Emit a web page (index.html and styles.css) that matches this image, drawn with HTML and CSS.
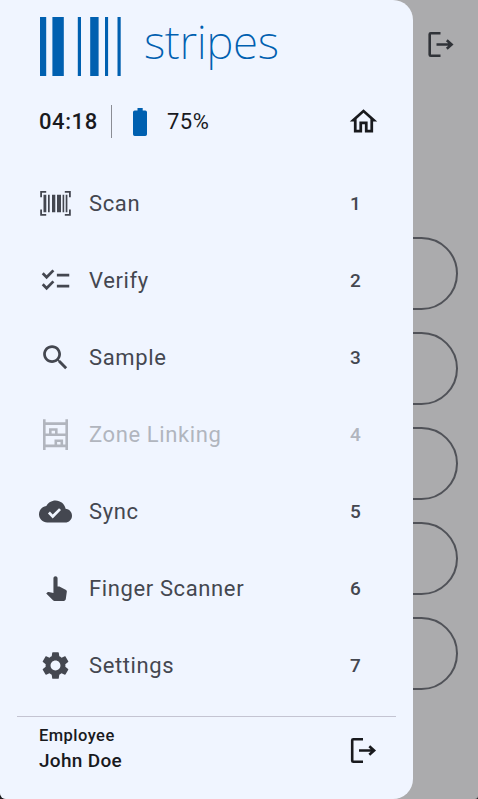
FILE: index.html
```html
<!DOCTYPE html>
<html lang="en">
<head>
<meta charset="utf-8">
<title>Stripes</title>
<link rel="stylesheet" href="styles.css">
</head>
<body>
<svg class="defs" width="0" height="0">
  <symbol id="logout" viewBox="0 0 27 27">
    <path d="M13 2.200H3.300Q2.200 2.200 2.200 3.300V23.700Q2.200 24.800 3.300 24.800H13M9 13.500H24.500M19.300 9.200l4.800 4.300-4.800 4.300" fill="none" stroke="currentColor" stroke-width="2.600"/>
  </symbol>
</svg>
<main class="page">
  <header class="page-top"><svg class="exit"><use href="#logout"/></svg></header>
  <div class="options">
    <div class="option"></div>
    <div class="option"></div>
    <div class="option"></div>
    <div class="option"></div>
    <div class="option"></div>
  </div>
</main>
<aside class="drawer">
  <div class="brand">
    <svg class="bars" viewBox="0 0 81 59"><path d="M0 0h6.200v59H0zM12.400 0h11.400v59H12.400zM37.800 0H41v59h-3.200zM50.200 0h8.400v59h-8.400zM65 0h3.100v59H65zM77.500 0h3.200v59h-3.200z"/></svg>
    <span class="name">stripes</span>
  </div>
  <div class="status">
    <span class="time">04:18</span>
    <svg class="battery" viewBox="0 0 14 28"><path d="M4.500 0h5.200v2.600h2.600Q14 2.600 14 4.300v21.900Q14 28 12.300 28H1.700Q0 28 0 26.200V4.300Q0 2.600 1.700 2.600h2.800z"/></svg>
    <span class="level">75%</span>
    <svg class="icon home" viewBox="0 0 24 24"><path d="M12 5.690l5 4.500V18h-2v-6H9v6H7v-7.810l5-4.500M12 3L2 12h3v8h6v-6h2v6h6v-8h3L12 3z"/></svg>
  </div>
  <nav class="menu">
    <a class="item"><svg class="icon" viewBox="0 0 33 33"><path d="M1.200 4h6v1.800H3v4.400H1.200zM25.800 4h6v6.200H30V5.800h-4.200zM1.200 22.600H3V27h4.200v1.800h-6zM30 22.600h1.800v6.200h-6V27H30zM4.500 7.800h2.800v17.400H4.500zM9 7.800h1.700v17.400H9zM13 7.800h3.300v17.400H13zM18 7.800h4v17.400h-4zM23.600 7.800h1.600v17.400h-1.600zM26.700 7.800h1.700v17.400h-1.700z"/></svg><span class="label">Scan</span><span class="key">1</span></a>
    <a class="item"><svg class="icon" viewBox="0 0 24 24"><path d="M22 7h-9v2h9V7zm0 8h-9v2h9v-2zM5.540 11L2 7.460l1.410-1.410 2.120 2.120 4.240-4.240 1.410 1.410L5.540 11zm0 8L2 15.460l1.410-1.410 2.120 2.120 4.240-4.240 1.410 1.410L5.540 19z"/></svg><span class="label">Verify</span><span class="key">2</span></a>
    <a class="item"><svg class="icon" viewBox="0 0 24 24"><path d="M15.500 14h-.790l-.280-.270C15.410 12.590 16 11.110 16 9.500 16 5.910 13.090 3 9.500 3S3 5.910 3 9.500 5.910 16 9.500 16c1.610 0 3.090-.590 4.230-1.570l.270.280v.790l5 4.990L20.490 19l-4.990-5zm-6 0C7.010 14 5 11.990 5 9.500S7.010 5 9.500 5 14 7.010 14 9.500 11.990 14 9.500 14z"/></svg><span class="label">Sample</span><span class="key">3</span></a>
    <a class="item disabled"><svg class="icon" viewBox="0 0 33 33"><path d="M5.300 1.300v30.700M27.700 1.300v30.700M5 5.600h23M5 16.700h23M5 27.900h23M11.300 16.500v-5h6v5M16.800 27.800v-5h6v5" fill="none" stroke="currentColor" stroke-width="2.600"/></svg><span class="label">Zone Linking</span><span class="key">4</span></a>
    <a class="item"><svg class="icon" viewBox="0 0 24 24"><path d="M19.350 10.040C18.670 6.590 15.640 4 12 4 9.110 4 6.600 5.640 5.350 8.040 2.340 8.360 0 10.910 0 14c0 3.310 2.690 6 6 6h13c2.760 0 5-2.240 5-5 0-2.640-2.050-4.780-4.650-4.960zM10 17l-3.500-3.500 1.410-1.410L10 14.170l4.600-4.600 1.410 1.410L10 17z"/></svg><span class="label">Sync</span><span class="key">5</span></a>
    <a class="item"><svg class="icon" viewBox="0 0 24 24"><path transform="translate(.5 -3)" d="M18.840 15.870l-4.540-2.260c-.170-.070-.350-.110-.540-.110H13v-6c0-.830-.670-1.500-1.500-1.500S10 6.670 10 7.500v10.740l-3.430-.720c-.080-.010-.150-.030-.240-.030-.310 0-.590.130-.790.330l-.790.800 4.940 4.940c.270.270.650.440 1.060.440h6.790c.750 0 1.330-.550 1.440-1.280l.750-5.270c.010-.070.020-.140.020-.200 0-.620-.380-1.160-.910-1.380z"/></svg><span class="label">Finger Scanner</span><span class="key">6</span></a>
    <a class="item"><svg class="icon" viewBox="0 0 24 24"><path d="M19.140 12.940c.040-.300.060-.610.060-.940 0-.320-.020-.640-.070-.940l2.030-1.580c.180-.140.230-.410.120-.610l-1.920-3.320c-.120-.220-.370-.290-.590-.220l-2.390.960c-.500-.380-1.030-.700-1.620-.940l-.360-2.540c-.040-.240-.240-.410-.480-.410h-3.840c-.240 0-.430.170-.470.410l-.360 2.540c-.590.240-1.130.570-1.620.940l-2.390-.960c-.220-.080-.470 0-.590.220L2.740 8.870c-.120.210-.080.470.120.610l2.030 1.580c-.050.300-.090.630-.090.940s.020.640.070.940l-2.030 1.580c-.180.140-.230.410-.120.610l1.920 3.320c.120.220.370.290.590.220l2.390-.960c.500.380 1.030.700 1.620.940l.360 2.540c.050.240.240.410.480.410h3.840c.240 0 .440-.170.470-.410l.360-2.540c.590-.240 1.130-.560 1.620-.940l2.390.960c.220.080.470 0 .590-.220l1.920-3.320c.120-.220.070-.470-.120-.610l-2.010-1.580zM12 15.600c-1.980 0-3.600-1.620-3.600-3.600s1.620-3.600 3.600-3.600 3.600 1.620 3.600 3.600-1.620 3.600-3.600 3.600z"/></svg><span class="label">Settings</span><span class="key">7</span></a>
  </nav>
  <footer class="user">
    <div class="who"><span class="role">Employee</span><span class="person">John Doe</span></div>
    <svg class="exit"><use href="#logout"/></svg>
  </footer>
</aside>
</body>
</html>
```

FILE: styles.css
```css
* { box-sizing: border-box; }
body {
  margin: 0;
  width: 478px;
  height: 799px;
  overflow: hidden;
  position: relative;
  background: #1d1d20;
  font-family: Roboto, sans-serif;
  color: #191a1e;
}
svg { display: block; flex: none; fill: currentColor; }
.defs { position: absolute; }
.page {
  height: 799px;
  background: #ababad;
  border-radius: 0 0 3px 6px;
}
.page-top {
  height: 237px;
  padding: 31px 21px 0 0;
  display: flex;
  justify-content: flex-end;
  color: #303338;
}
.exit { width: 27px; height: 27px; }
.page-top .exit { width: 28px; margin-right: 2px; }
.options {
  display: flex;
  flex-direction: column;
  gap: 22px;
  padding: 0 20px;
}
.option {
  height: 73px;
  border: 2px solid #505258;
  border-radius: 37px;
}
.drawer {
  position: absolute;
  inset: 0 auto 0 0;
  width: 413px;
  background: #f0f5ff;
  border-radius: 0 20px 20px 6px;
  display: flex;
  flex-direction: column;
}
.brand {
  height: 93px;
  padding: 17px 0 0 40px;
  display: flex;
  color: #0060b0;
}
.bars { width: 81px; height: 59px; }
.name {
  margin: -5px 0 0 23px;
  font: 200 46px/58px "Noto Sans", sans-serif;
  letter-spacing: -.4px;
}
.status {
  height: 57px;
  padding: 0 33px 0 39px;
  display: flex;
  align-items: center;
  font-size: 22px;
}
.time {
  width: 73px;
  height: 33px;
  line-height: 33px;
  border-right: 1px solid #8b8d95;
  font-weight: 500;
  letter-spacing: .6px;
}
.battery { width: 14px; height: 28px; margin: 0 20px 0 21px; color: #0060b0; }
.level { letter-spacing: .5px; }
.icon { width: 33px; height: 33px; }
.home { margin-left: auto; }
.menu { padding: 15px 52px 0 39px; color: #444750; }
.item { height: 77px; display: flex; align-items: center; }
.label { margin-left: 17px; font-size: 22px; letter-spacing: .62px; }
.key { margin-left: auto; font-size: 19px; font-weight: 500; letter-spacing: .2px; }
.disabled { color: #b1b5be; }
.user {
  margin: 12px 17px 0;
  padding: 9px 19px 0 22px;
  border-top: 1px solid #c4c4d2;
  display: flex;
  justify-content: space-between;
}
.who { display: flex; flex-direction: column; font-weight: 500; }
.role { font-size: 16.5px; line-height: 20px; letter-spacing: .45px; }
.person { font-size: 19px; line-height: 30px; letter-spacing: .3px; }
.user .exit { margin-top: 11px; }
```
